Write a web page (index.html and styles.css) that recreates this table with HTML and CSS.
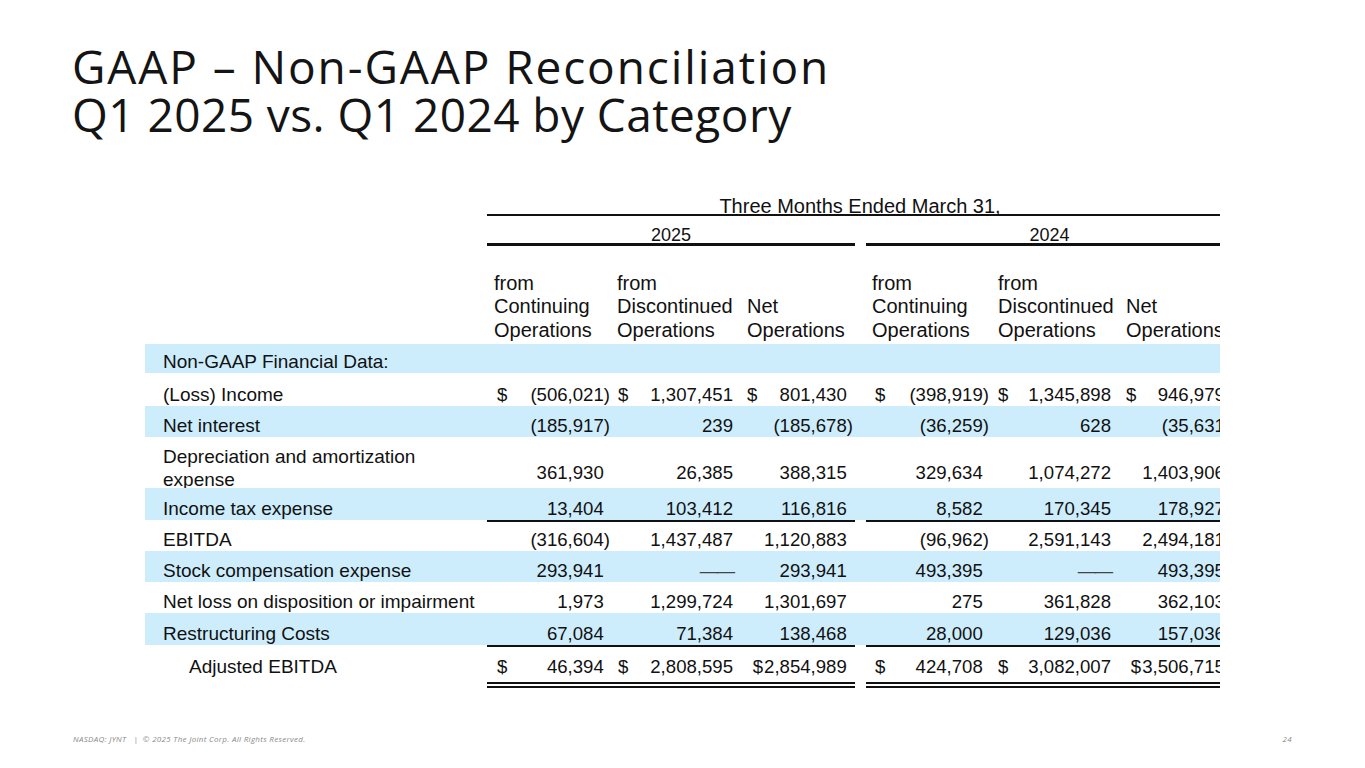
FILE: index.html
```html
<!DOCTYPE html>
<html lang="en">
<head>
<meta charset="utf-8">
<title>GAAP – Non-GAAP Reconciliation</title>
<link rel="stylesheet" href="styles.css">
</head>
<body>
<div class="slide">
  <h1 class="title"><span class="t1">GAAP – Non-GAAP Reconciliation</span><span class="t2">Q1 2025 vs. Q1 2024 by Category</span></h1>

  <div class="table-wrap">
    <table class="recon">
      <colgroup>
        <col class="w-label"><col class="w-c1"><col class="w-c2"><col class="w-c3"><col class="w-gap"><col class="w-c4"><col class="w-c5"><col class="w-c6">
      </colgroup>
      <thead>
        <tr class="r-period">
          <th></th>
          <th colspan="7" class="period">Three Months Ended March 31,</th>
        </tr>
        <tr class="r-year">
          <th></th>
          <th colspan="3" class="year">2025</th>
          <th></th>
          <th colspan="3" class="year">2024</th>
        </tr>
        <tr class="r-cols">
          <th></th>
          <th class="h c1">from<br>Continuing<br>Operations</th>
          <th class="h c2">from<br>Discontinued<br>Operations</th>
          <th class="h c3">Net<br>Operations</th>
          <th></th>
          <th class="h c4">from<br>Continuing<br>Operations</th>
          <th class="h c5">from<br>Discontinued<br>Operations</th>
          <th class="h c6">Net<br>Operations</th>
        </tr>
      </thead>
      <tbody>
        <tr class="row blue r-section">
          <td class="label">Non-GAAP Financial Data:</td>
          <td></td><td></td><td></td><td></td><td></td><td></td><td></td>
        </tr>
        <tr class="row r-loss">
          <td class="label">(Loss) Income</td>
          <td class="n c1"><div class="dv"><span class="cur">$</span><span>(506,021)</span></div></td>
          <td class="n c2"><div class="dv"><span class="cur">$</span><span>1,307,451</span></div></td>
          <td class="n c3"><div class="dv"><span class="cur">$</span><span>801,430<i class="pp">)</i></span></div></td>
          <td></td>
          <td class="n c4"><div class="dv"><span class="cur">$</span><span>(398,919)</span></div></td>
          <td class="n c5"><div class="dv"><span class="cur">$</span><span>1,345,898</span></div></td>
          <td class="n c6"><div class="dv"><span class="cur">$</span><span>946,979<i class="pp">)</i></span></div></td>
        </tr>
        <tr class="row blue">
          <td class="label">Net interest</td>
          <td class="n c1">(185,917)</td>
          <td class="n c2">239</td>
          <td class="n c3">(185,678)</td>
          <td></td>
          <td class="n c4">(36,259)</td>
          <td class="n c5">628</td>
          <td class="n c6">(35,631)</td>
        </tr>
        <tr class="row r-dep">
          <td class="label"><div class="clip">Depreciation and amortization expense</div></td>
          <td class="n c1">361,930<i class="pp">)</i></td>
          <td class="n c2">26,385</td>
          <td class="n c3">388,315<i class="pp">)</i></td>
          <td></td>
          <td class="n c4">329,634<i class="pp">)</i></td>
          <td class="n c5">1,074,272</td>
          <td class="n c6">1,403,906<i class="pp">)</i></td>
        </tr>
        <tr class="row blue r-tax">
          <td class="label">Income tax expense</td>
          <td class="n c1">13,404<i class="pp">)</i></td>
          <td class="n c2">103,412</td>
          <td class="n c3">116,816<i class="pp">)</i></td>
          <td></td>
          <td class="n c4">8,582<i class="pp">)</i></td>
          <td class="n c5">170,345</td>
          <td class="n c6">178,927<i class="pp">)</i></td>
        </tr>
        <tr class="row ruled r-ebitda">
          <td class="label">EBITDA</td>
          <td class="n c1">(316,604)</td>
          <td class="n c2">1,437,487</td>
          <td class="n c3">1,120,883<i class="pp">)</i></td>
          <td class="gap"></td>
          <td class="n c4">(96,962)</td>
          <td class="n c5">2,591,143</td>
          <td class="n c6">2,494,181<i class="pp">)</i></td>
        </tr>
        <tr class="row blue">
          <td class="label">Stock compensation expense</td>
          <td class="n c1">293,941<i class="pp">)</i></td>
          <td class="n c2"><span class="dash">——</span></td>
          <td class="n c3">293,941<i class="pp">)</i></td>
          <td></td>
          <td class="n c4">493,395<i class="pp">)</i></td>
          <td class="n c5"><span class="dash">——</span></td>
          <td class="n c6">493,395<i class="pp">)</i></td>
        </tr>
        <tr class="row">
          <td class="label">Net loss on disposition or impairment</td>
          <td class="n c1">1,973<i class="pp">)</i></td>
          <td class="n c2">1,299,724</td>
          <td class="n c3">1,301,697<i class="pp">)</i></td>
          <td></td>
          <td class="n c4">275<i class="pp">)</i></td>
          <td class="n c5">361,828</td>
          <td class="n c6">362,103<i class="pp">)</i></td>
        </tr>
        <tr class="row blue r-restr">
          <td class="label">Restructuring Costs</td>
          <td class="n c1">67,084<i class="pp">)</i></td>
          <td class="n c2">71,384</td>
          <td class="n c3">138,468<i class="pp">)</i></td>
          <td></td>
          <td class="n c4">28,000<i class="pp">)</i></td>
          <td class="n c5">129,036</td>
          <td class="n c6">157,036<i class="pp">)</i></td>
        </tr>
        <tr class="row ruled total">
          <td class="label indent">Adjusted EBITDA</td>
          <td class="n c1"><div class="dv"><span class="cur">$</span><span>46,394<i class="pp">)</i></span></div></td>
          <td class="n c2"><div class="dv"><span class="cur">$</span><span>2,808,595</span></div></td>
          <td class="n c3"><div class="dv tight"><span class="cur">$</span><span>2,854,989<i class="pp">)</i></span></div></td>
          <td class="gap"></td>
          <td class="n c4"><div class="dv"><span class="cur">$</span><span>424,708<i class="pp">)</i></span></div></td>
          <td class="n c5"><div class="dv"><span class="cur">$</span><span>3,082,007</span></div></td>
          <td class="n c6"><div class="dv tight"><span class="cur">$</span><span>3,506,715<i class="pp">)</i></span></div></td>
        </tr>
      </tbody>
    </table>
  </div>

  <footer class="foot">
    <span class="legal">NASDAQ: JYNT &nbsp; | &nbsp;© 2025 The Joint Corp. All Rights Reserved.</span>
    <span class="page">24</span>
  </footer>
</div>
</body>
</html>
```

FILE: styles.css
```css
* { box-sizing: border-box; }

html, body {
  margin: 0;
  padding: 0;
  background: #ffffff;
}

body {
  font-family: "Liberation Sans", Arial, sans-serif;
  color: #111111;
}

.slide {
  width: 1365px;
  height: 768px;
  overflow: hidden;
  display: flex;
  flex-direction: column;
  padding-top: 42px;
}

.title {
  margin: 0 0 0 72px;
  font-family: "Open Sans", sans-serif;
  font-weight: 400;
  font-size: 46px;
  line-height: 48px;
  color: #141414;
}

.t1,
.t2 { display: block; }
.t1 { letter-spacing: 1.9px; }
.t2 { letter-spacing: 0.45px; }

/* ---------- table ---------- */
.table-wrap {
  margin: 48px 0 0 145px;
  width: 1075px;
  overflow: hidden;
}

.recon {
  table-layout: fixed;
  width: 1088px;
  border-collapse: separate;
  border-spacing: 0;
}

.w-label { width: 342px; }
.w-c1 { width: 127px; }
.w-c2 { width: 126px; }
.w-c3 { width: 115px; }
.w-gap { width: 11px; }
.w-c4 { width: 126px; }
.w-c5 { width: 126px; }
.w-c6 { width: 115px; }

.recon th,
.recon td {
  padding: 0;
  font-weight: 400;
  vertical-align: bottom;
  white-space: nowrap;
  color: #111;
}

/* header rows */
.r-period { height: 30px; }
.recon .period {
  font-size: 20px;
  line-height: 16px;
  text-align: center;
  border-bottom: 2px solid #111;
}

.r-year { height: 30px; }
.recon .year {
  font-size: 18px;
  line-height: 16px;
  text-align: center;
  border-bottom: 3px solid #111;
}

.r-cols { height: 98px; }
.recon .h {
  font-size: 20px;
  line-height: 23.5px;
  text-align: left;
  padding-bottom: 2px;
}

/* body rows */
.row { height: 31px; }
.row.blue { background: #cdedfc; }
.r-section { height: 29px; }
.r-loss { height: 33px; }
.r-dep { height: 51px; }
.r-tax { height: 32px; }
.r-restr { height: 32px; }
.total { height: 43px; }

.recon td.label {
  font-size: 19px;
  padding-left: 18px;
  line-height: normal;
}
.recon td.label.indent {
  padding-left: 44px;
  padding-bottom: 10px;
}

.clip {
  height: 51px;
  overflow: hidden;
  white-space: normal;
  padding-top: 8px;
  line-height: 23px;
  width: 290px;
}

.recon td.n {
  font-size: 18.6px;
  text-align: right;
  line-height: normal;
}

.recon .r-dep td.n { padding-bottom: 4px; }

.pp {
  font-style: normal;
  visibility: hidden;
}

.dv {
  display: flex;
  justify-content: space-between;
}
.dv.tight {
  justify-content: flex-end;
  gap: 1px;
}

.dash {
  letter-spacing: -2px;
  color: #444;
}

/* column paddings */
.recon .c1 { padding-left: 7px; padding-right: 4px; }
.recon .c2 { padding-left: 3px; padding-right: 7px; }
.recon .c3 { padding-left: 7px; padding-right: 2px; }
.recon .c4 { padding-left: 6px; padding-right: 3px; }
.recon .c5 { padding-left: 6px; padding-right: 7px; }
.recon .c6 { padding-left: 8px; padding-right: 2px; }
.c1 .cur, .c4 .cur { margin-left: 3px; }
.c2 .cur { margin-left: 1px; }

/* rules */
.recon .ruled td.n { border-top: 2px solid #111; }
.recon .total td.n {
  border-bottom: 6px double #111;
  padding-bottom: 4px;
}

/* ---------- footer ---------- */
.foot {
  margin-top: auto;
  display: flex;
  justify-content: space-between;
  align-items: center;
  padding: 0 73px 24px 73px;
  font-family: "Open Sans", sans-serif;
  font-style: italic;
  font-size: 8px;
  color: #8a8a8a;
  letter-spacing: 0.3px;
}
```
